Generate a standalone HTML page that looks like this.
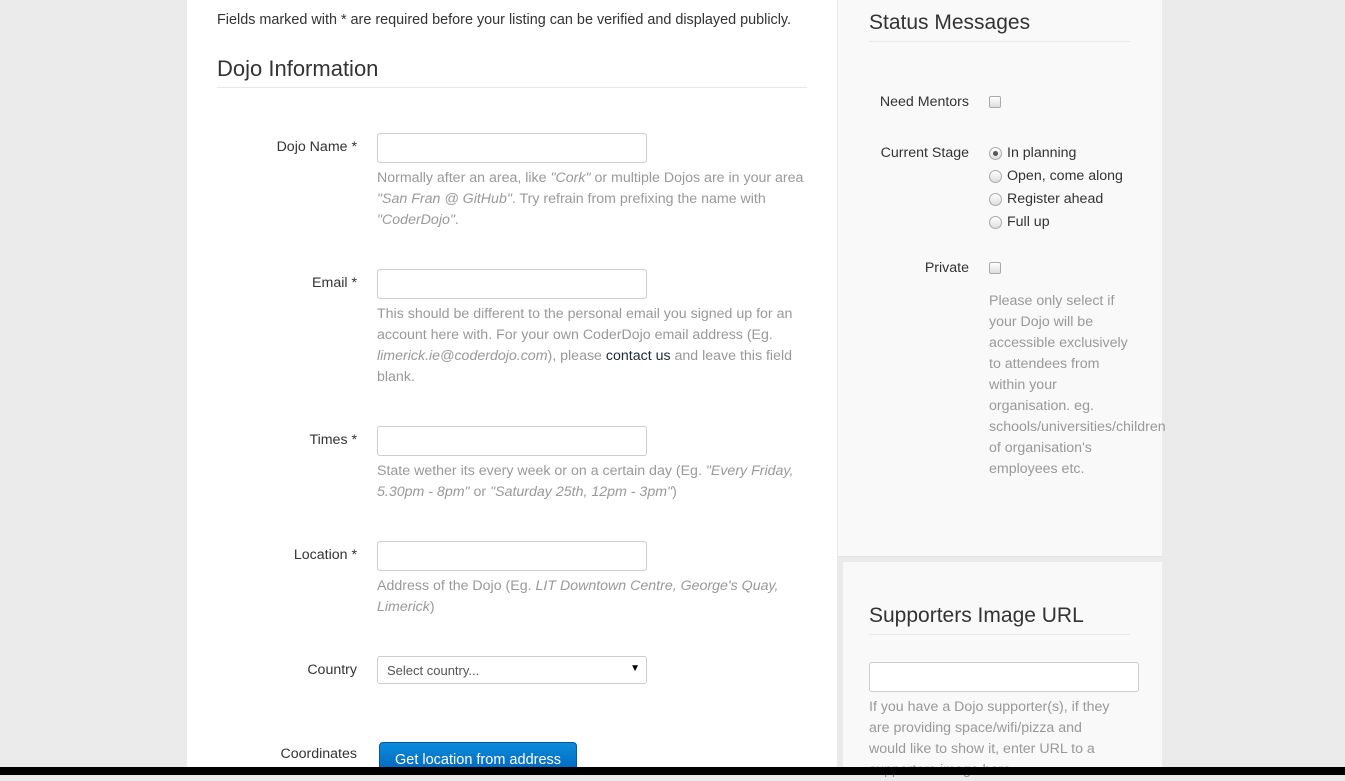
<!DOCTYPE html>
<html><head><meta charset="utf-8"><style>
*{margin:0;padding:0;box-sizing:border-box}
body{width:1345px;height:775px;overflow:hidden;background:#ebebeb;font-family:"Liberation Sans",sans-serif;font-size:14.2px;color:#333;position:relative}
.a{position:absolute;white-space:nowrap}
#main{position:absolute;left:187px;top:0;width:650px;height:775px;background:#fff}
#side1{position:absolute;left:838px;top:0;width:324px;height:557px;background:#f9f9f9;border-bottom:1px solid #e4e4e4}
#side2{position:absolute;left:843px;top:562px;width:319px;height:213px;background:#f9f9f9}
h2{position:absolute;font-weight:normal;font-size:21px;color:#333;white-space:nowrap}
.hr{position:absolute;height:1px;background:#e8e8e8}
.lbl{position:absolute;text-align:right;white-space:nowrap}
.inp{position:absolute;width:270px;height:30px;border:1px solid #ccc;border-radius:3px;background:#fff}
.help{position:absolute;color:#999;line-height:21px;white-space:nowrap}
.help i{font-style:italic}
.cb{position:absolute;width:12px;height:12px;border:1px solid #aaa;border-radius:2px;background:linear-gradient(#fff,#ddd)}
.rd{position:absolute;width:13px;height:13px;border:1px solid #aaa;border-radius:50%;background:linear-gradient(#fff,#ddd)}
#bar{position:absolute;left:0;top:767px;width:1345px;height:8px;background:#000}
</style></head><body>
<div id="main"></div>
<div id="side1"></div>
<div id="side2"></div>

<div class="a" style="left:217px;top:12px;font-size:14.4px">Fields marked with * are required before your listing can be verified and displayed publicly.</div>
<h2 style="left:217px;top:56px;font-size:22px">Dojo Information</h2>
<div class="hr" style="left:217px;top:87px;width:590px"></div>

<div class="lbl" style="right:988px;top:139px">Dojo Name *</div>
<div class="inp" style="left:377px;top:133px"></div>
<div class="help" style="left:377px;top:168px">Normally after an area, like <i>"Cork"</i> or multiple Dojos are in your area<br><i>"San Fran @ GitHub"</i>. Try refrain from prefixing the name with<br><i>"CoderDojo"</i>.</div>

<div class="lbl" style="right:988px;top:275px">Email *</div>
<div class="inp" style="left:377px;top:269px"></div>
<div class="help" style="left:377px;top:304px">This should be different to the personal email you signed up for an<br>account here with. For your own CoderDojo email address (Eg.<br><i>limerick.ie@coderdojo.com</i>), please <span style="color:#1a2a3a">contact us</span> and leave this field<br>blank.</div>

<div class="lbl" style="right:988px;top:432px">Times *</div>
<div class="inp" style="left:377px;top:426px"></div>
<div class="help" style="left:377px;top:461px">State wether its every week or on a certain day (Eg. <i>"Every Friday,</i><br><i>5.30pm - 8pm"</i> or <i>"Saturday 25th, 12pm - 3pm"</i>)</div>

<div class="lbl" style="right:988px;top:547px">Location *</div>
<div class="inp" style="left:377px;top:541px"></div>
<div class="help" style="left:377px;top:576px">Address of the Dojo (Eg. <i>LIT Downtown Centre, George's Quay,</i><br><i>Limerick</i>)</div>

<div class="lbl" style="right:988px;top:662px">Country</div>
<div class="inp" style="left:377px;top:656px;height:28px"><span class="a" style="left:9px;top:6px;font-size:13px;color:#555">Select country...</span><span class="a" style="right:6px;top:6px;font-size:10px;color:#000">▼</span></div>

<div class="lbl" style="right:988px;top:746px">Coordinates</div>
<div class="a" style="left:379px;top:742px;width:198px;height:30px;background:linear-gradient(#0a8bd8,#0568c0);border:1px solid #0558a8;border-radius:4px;color:#fff;font-size:14.5px;padding:9px 0 0 15px">Get location from address</div>

<h2 style="left:869px;top:11px">Status Messages</h2>
<div class="hr" style="left:869px;top:41px;width:261px"></div>
<div class="lbl" style="right:376px;top:94px">Need Mentors</div>
<div class="cb" style="left:989px;top:96px"></div>
<div class="lbl" style="right:376px;top:145px">Current Stage</div>
<div class="rd" style="left:989px;top:147px"><div style="position:absolute;left:3px;top:3px;width:5px;height:5px;border-radius:50%;background:#555"></div></div>
<div class="a" style="left:1007px;top:145px">In planning</div>
<div class="rd" style="left:989px;top:170px"></div>
<div class="a" style="left:1007px;top:168px">Open, come along</div>
<div class="rd" style="left:989px;top:193px"></div>
<div class="a" style="left:1007px;top:191px">Register ahead</div>
<div class="rd" style="left:989px;top:216px"></div>
<div class="a" style="left:1007px;top:214px">Full up</div>
<div class="lbl" style="right:376px;top:260px">Private</div>
<div class="cb" style="left:989px;top:262px"></div>
<div class="help" style="left:989px;top:291px">Please only select if<br>your Dojo will be<br>accessible exclusively<br>to attendees from<br>within your<br>organisation. eg.<br>schools/universities/children<br>of organisation's<br>employees etc.</div>

<h2 style="left:869px;top:604px">Supporters Image URL</h2>
<div class="hr" style="left:869px;top:634px;width:261px"></div>
<div class="inp" style="left:869px;top:662px;width:270px"></div>
<div class="help" style="left:869px;top:697px">If you have a Dojo supporter(s), if they<br>are providing space/wifi/pizza and<br>would like to show it, enter URL to a<br>supporters image here</div>

<div id="bar"></div>
</body></html>
